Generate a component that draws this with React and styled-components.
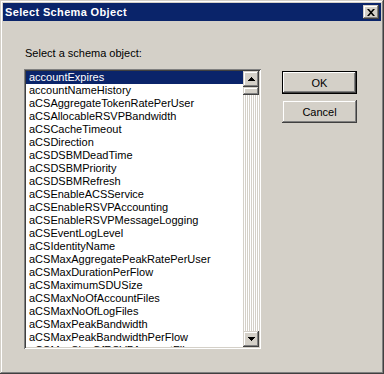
import React from "react";
import styled, { createGlobalStyle } from "styled-components";

const items = [
  "accountExpires",
  "accountNameHistory",
  "aCSAggregateTokenRatePerUser",
  "aCSAllocableRSVPBandwidth",
  "aCSCacheTimeout",
  "aCSDirection",
  "aCSDSBMDeadTime",
  "aCSDSBMPriority",
  "aCSDSBMRefresh",
  "aCSEnableACSService",
  "aCSEnableRSVPAccounting",
  "aCSEnableRSVPMessageLogging",
  "aCSEventLogLevel",
  "aCSIdentityName",
  "aCSMaxAggregatePeakRatePerUser",
  "aCSMaxDurationPerFlow",
  "aCSMaximumSDUSize",
  "aCSMaxNoOfAccountFiles",
  "aCSMaxNoOfLogFiles",
  "aCSMaxPeakBandwidth",
  "aCSMaxPeakBandwidthPerFlow",
  "aCSMaxSizeOfRSVPAccountFile",
];

const raised = `
  box-shadow: inset -1px -1px #404040, inset 1px 1px #d4d0c8,
    inset -2px -2px #808080, inset 2px 2px #ffffff;
`;

const Global = createGlobalStyle`
  html, body {
    margin: 0;
    padding: 0;
    background: #d4d0c8;
  }
  body {
    font-family: "Liberation Sans", Arial, sans-serif;
    font-size: 11px;
    color: #000;
  }
`;

const Window = styled.div`
  width: 384px;
  height: 374px;
  box-sizing: border-box;
  padding: 3px;
  background: #d4d0c8;
  display: flex;
  flex-direction: column;
  ${raised}
`;

const TitleBar = styled.div`
  height: 18px;
  background: #0a246a;
  display: flex;
  align-items: center;
  justify-content: space-between;
  padding: 0 2px 0 2px;
`;

const Title = styled.div`
  color: #fff;
  font-weight: bold;
  font-size: 11px;
  letter-spacing: 0.35px;
  line-height: 18px;
`;

const CloseBtn = styled.div`
  width: 16px;
  height: 14px;
  background: #d4d0c8;
  display: flex;
  align-items: center;
  justify-content: center;
  ${raised}
`;

const Body = styled.div`
  flex: 1;
  display: flex;
  padding: 26px 24px 0 21px;
  gap: 21px;
`;

const LeftCol = styled.div`
  display: flex;
  flex-direction: column;
  gap: 9px;
`;

const Label = styled.div`
  line-height: 13px;
  padding-left: 1px;
`;

const ListBox = styled.div`
  width: 237px;
  height: 280px;
  box-sizing: border-box;
  padding: 2px;
  background: #fff;
  display: flex;
  box-shadow: inset 1px 1px #808080, inset -1px -1px #ffffff,
    inset 2px 2px #404040, inset -2px -2px #d4d0c8;
`;

const Rows = styled.div`
  flex: 1;
  overflow: hidden;
`;

const Row = styled.div`
  height: 13px;
  line-height: 13px;
  padding-left: 3px;
  white-space: nowrap;
  background: ${(p) => (p.$selected ? "#0a246a" : "transparent")};
  color: ${(p) => (p.$selected ? "#fff" : "#000")};
`;

const ScrollBar = styled.div`
  width: 16px;
  display: flex;
  flex-direction: column;
  background-color: #fff;
  background-image: linear-gradient(45deg, #d4d0c8 25%, transparent 25%),
    linear-gradient(-45deg, #d4d0c8 25%, transparent 25%),
    linear-gradient(45deg, transparent 75%, #d4d0c8 75%),
    linear-gradient(-45deg, transparent 75%, #d4d0c8 75%);
  background-size: 2px 2px;
`;

const ScrollButton = styled.div`
  width: 16px;
  height: 16px;
  background: #d4d0c8;
  display: flex;
  align-items: center;
  justify-content: center;
  ${raised}
`;

const Thumb = styled.div`
  width: 16px;
  height: 8px;
  background: #d4d0c8;
  ${raised}
`;

const Track = styled.div`
  flex: 1;
`;

const RightCol = styled.div`
  display: flex;
  flex-direction: column;
  gap: 6px;
  margin-top: 24px;
`;

const Button = styled.div`
  width: 75px;
  height: 23px;
  box-sizing: border-box;
  display: flex;
  align-items: center;
  justify-content: center;
  background: #d4d0c8;
  ${(p) =>
    p.$default
      ? `box-shadow: inset 0 0 0 1px #000, inset -2px -2px #404040, inset 2px 2px #ffffff,
    inset -3px -3px #808080, inset 3px 3px #d4d0c8;`
      : raised}
`;

const Arrow = ({ down }) => (
  <svg width="7" height="4" viewBox="0 0 7 4">
    <path
      d={down ? "M0 0H7L3.5 4Z" : "M3.5 0L7 4H0Z"}
      fill="#000"
      shapeRendering="crispEdges"
    />
  </svg>
);

export default function App() {
  return (
    <>
      <Global />
      <Window>
        <TitleBar>
          <Title>Select Schema Object</Title>
          <CloseBtn>
            <svg width="8" height="7" viewBox="0 0 8 7">
              <path
                d="M0 0h2l2 2.3 2-2.3h2l-3 3.5 3 3.5h-2l-2-2.3-2 2.3h-2l3-3.5z"
                fill="#000"
              />
            </svg>
          </CloseBtn>
        </TitleBar>
        <Body>
          <LeftCol>
            <Label>Select a schema object:</Label>
            <ListBox>
              <Rows>
                {items.map((it, i) => (
                  <Row key={it} $selected={i === 0}>
                    {it}
                  </Row>
                ))}
              </Rows>
              <ScrollBar>
                <ScrollButton>
                  <Arrow />
                </ScrollButton>
                <Thumb />
                <Track />
                <ScrollButton>
                  <Arrow down />
                </ScrollButton>
              </ScrollBar>
            </ListBox>
          </LeftCol>
          <RightCol>
            <Button $default>OK</Button>
            <Button>Cancel</Button>
          </RightCol>
        </Body>
      </Window>
    </>
  );
}
